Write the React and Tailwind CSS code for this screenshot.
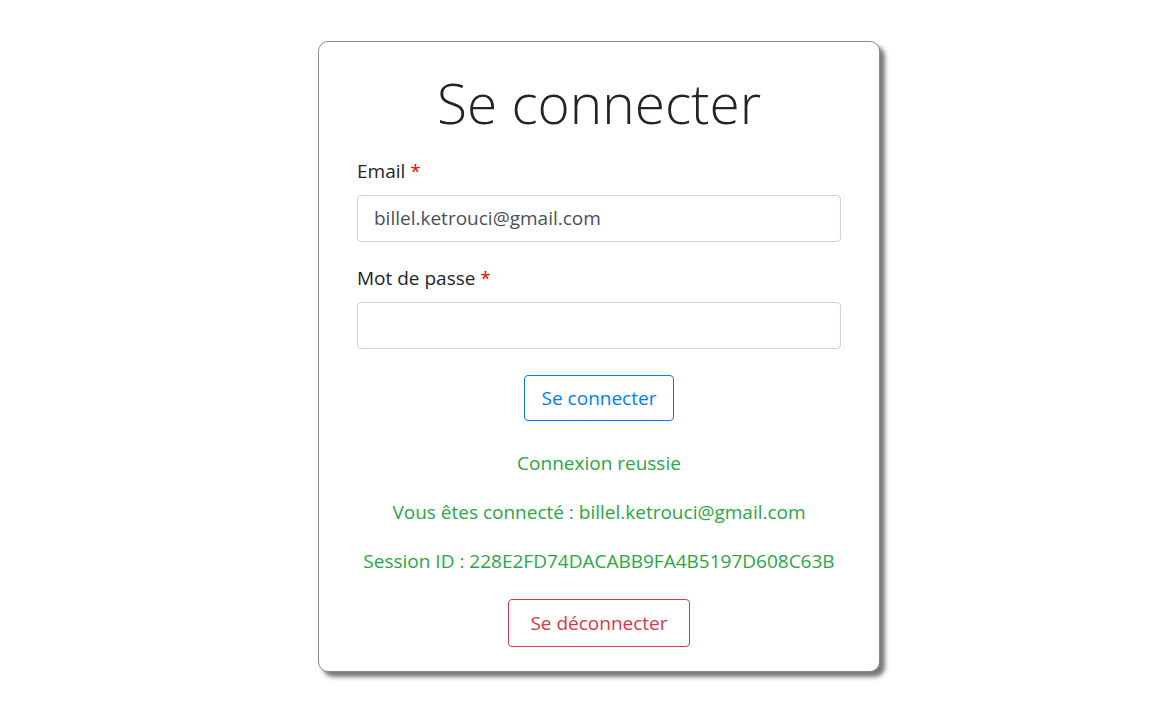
export default function App() {
  const font = { fontFamily: '"Open Sans", "Noto Sans", sans-serif' };
  return (
    <div className="min-h-[717px] bg-white flex justify-center pl-[40px] pt-[41px]" style={font}>
      <div className="w-[562px] h-[631px] border border-[#8a8a8a] rounded-[10px] bg-white shadow-[5px_5px_4px_#7a7a7a] px-[38px] pt-[27px] flex flex-col">
        <h1 className="text-center text-[55px] leading-[67px] font-light text-[#212529]">Se connecter</h1>
        <label className="mt-[21px] text-[19px] leading-[28px] text-[#212529]">
          Email <span className="text-[#ff0000]">*</span>
        </label>
        <div className="mt-[10px] h-[47px] border border-[#ced4da] rounded-[4px] flex items-center px-[16px] text-[19px] text-[#495057]">
          billel.ketrouci@gmail.com
        </div>
        <label className="mt-[22px] text-[19px] leading-[28px] text-[#212529]">
          Mot de passe <span className="text-[#ff0000]">*</span>
        </label>
        <div className="mt-[10px] h-[47px] border border-[#ced4da] rounded-[4px]"></div>
        <div className="mt-[26px] flex justify-center">
          <button className="w-[150px] h-[46px] border border-[#007bff] rounded-[4px] text-[#007bff] text-[19px]">Se connecter</button>
        </div>
        <p className="mt-[28px] text-center text-[19px] leading-[28px] text-[#28a745]">Connexion reussie</p>
        <p className="mt-[21px] text-center text-[19px] leading-[28px] text-[#28a745]">Vous êtes connecté : billel.ketrouci@gmail.com</p>
        <p className="mt-[21px] text-center text-[19px] leading-[28px] text-[#28a745]">Session ID : 228E2FD74DACABB9FA4B5197D608C63B</p>
        <div className="mt-[24px] flex justify-center">
          <button className="w-[182px] h-[48px] border border-[#dc3545] rounded-[4px] text-[#dc3545] text-[19px]">Se déconnecter</button>
        </div>
      </div>
    </div>
  );
}
